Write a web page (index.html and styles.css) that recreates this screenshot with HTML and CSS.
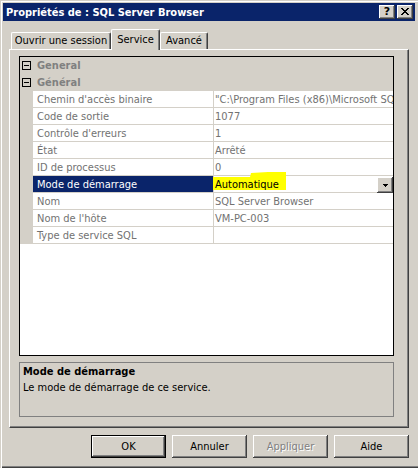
FILE: index.html
```html
<!DOCTYPE html>
<html lang="fr">
<head>
<meta charset="utf-8">
<title>Propriétés de : SQL Server Browser</title>
<link rel="stylesheet" href="styles.css">
</head>
<body>
<div class="window">
  <div class="titlebar">
    <span class="title">Propriétés de : SQL Server Browser</span>
    <div class="caption-buttons">
      <button class="caption-btn">?</button>
      <button class="caption-btn">
        <svg width="8" height="7" viewBox="0 0 8 7" shape-rendering="crispEdges">
          <rect x="0" y="0" width="2" height="1"/><rect x="6" y="0" width="2" height="1"/>
          <rect x="1" y="1" width="2" height="1"/><rect x="5" y="1" width="2" height="1"/>
          <rect x="2" y="2" width="4" height="1"/>
          <rect x="3" y="3" width="2" height="1"/>
          <rect x="2" y="4" width="4" height="1"/>
          <rect x="1" y="5" width="2" height="1"/><rect x="5" y="5" width="2" height="1"/>
          <rect x="0" y="6" width="2" height="1"/><rect x="6" y="6" width="2" height="1"/>
        </svg>
      </button>
    </div>
  </div>

  <div class="client">
    <div class="tabs">
      <div class="tab tab-logon">Ouvrir une session</div>
      <div class="tab tab-service tab-active">Service</div>
      <div class="tab tab-advanced">Avancé</div>
    </div>

    <div class="panel">
      <div class="propgrid">
        <div class="row category">
          <span class="gutter"><span class="toggle"></span></span>
          <span class="cat-label">General</span>
        </div>
        <div class="row category">
          <span class="gutter"><span class="toggle"></span></span>
          <span class="cat-label">Général</span>
        </div>
        <div class="row">
          <span class="gutter"></span>
          <span class="name">Chemin d'accès binaire</span>
          <span class="value">"C:\Program Files (x86)\Microsoft SQL Server\90\Shared\sqlbrowser.exe"</span>
        </div>
        <div class="row">
          <span class="gutter"></span>
          <span class="name">Code de sortie</span>
          <span class="value">1077</span>
        </div>
        <div class="row">
          <span class="gutter"></span>
          <span class="name">Contrôle d'erreurs</span>
          <span class="value">1</span>
        </div>
        <div class="row">
          <span class="gutter"></span>
          <span class="name">État</span>
          <span class="value">Arrêté</span>
        </div>
        <div class="row">
          <span class="gutter"></span>
          <span class="name">ID de processus</span>
          <span class="value">0</span>
        </div>
        <div class="row selected">
          <span class="gutter"></span>
          <span class="name">Mode de démarrage</span>
          <span class="value editable">
            <span class="marker"></span>
            <span class="value-text">Automatique</span>
            <span class="dropdown">
              <svg width="5" height="3" viewBox="0 0 5 3" shape-rendering="crispEdges">
                <rect x="0" y="0" width="5" height="1"/>
                <rect x="1" y="1" width="3" height="1"/>
                <rect x="2" y="2" width="1" height="1"/>
              </svg>
            </span>
          </span>
        </div>
        <div class="row">
          <span class="gutter"></span>
          <span class="name">Nom</span>
          <span class="value">SQL Server Browser</span>
        </div>
        <div class="row">
          <span class="gutter"></span>
          <span class="name">Nom de l'hôte</span>
          <span class="value">VM-PC-003</span>
        </div>
        <div class="row">
          <span class="gutter"></span>
          <span class="name">Type de service SQL</span>
          <span class="value"></span>
        </div>
      </div>

      <div class="description">
        <div class="desc-title">Mode de démarrage</div>
        <div class="desc-text">Le mode de démarrage de ce service.</div>
      </div>
    </div>

    <div class="actions">
      <button class="btn btn-default">OK</button>
      <button class="btn">Annuler</button>
      <button class="btn btn-disabled">Appliquer</button>
      <button class="btn">Aide</button>
    </div>
  </div>
</div>
</body>
</html>
```

FILE: styles.css
```css
html, body {
  margin: 0;
  padding: 0;
}

body {
  width: 418px;
  height: 468px;
  overflow: hidden;
  background: #d4d0c8;
  font-family: "DejaVu Sans Condensed", "DejaVu Sans", sans-serif;
  font-stretch: condensed;
  font-size: 11px;
  color: #000;
}

/* dialog frame: light edge top/left, shadow at the bottom */
.window {
  width: 418px;
  height: 468px;
  box-sizing: border-box;
  padding: 3px 3px 2px 3px;
  display: flex;
  flex-direction: column;
  background: #d4d0c8;
  box-shadow: inset 1px 1px 0 #d4d0c8, inset 2px 2px 0 #fff,
              inset 0 -1px 0 #404040, inset 0 -2px 0 #808080;
}

.titlebar {
  height: 18px;
  flex: none;
  display: flex;
  align-items: center;
  justify-content: space-between;
  padding: 0 2px 0 3px;
  background: #0a246a;
  color: #fff;
  font-weight: bold;
}

.title {
  white-space: nowrap;
}

.caption-buttons {
  display: flex;
  gap: 2px;
}

.caption-btn,
.btn,
.dropdown {
  background: #d4d0c8;
  box-shadow: inset -1px -1px 0 #404040, inset 1px 1px 0 #fff,
              inset -2px -2px 0 #808080;
}

.caption-btn {
  width: 16px;
  height: 14px;
  padding: 0;
  border: 0;
  display: flex;
  align-items: center;
  justify-content: center;
  font: bold 11px "DejaVu Sans", sans-serif;
  color: #000;
  line-height: 14px;
}

.caption-btn svg {
  fill: #000;
  margin-top: -1px;
}

.client {
  flex: 1;
  display: flex;
  flex-direction: column;
  padding: 8px 6px 0 6px;
}

/* tab strip */
.tabs {
  position: relative;
  z-index: 1;
  height: 21px;
  margin-bottom: -1px;
  padding-left: 2px;
  display: flex;
  align-items: flex-start;
}

.tab {
  box-sizing: border-box;
  height: 17px;
  margin-top: 3px;
  border-top: 1px solid #fff;
  border-left: 1px solid #fff;
  border-right: 1px solid #404040;
  border-top-left-radius: 2px;
  border-top-right-radius: 2px;
  box-shadow: inset -1px 0 0 #808080;
  background: #d4d0c8;
  text-align: center;
  line-height: 15px;
  white-space: nowrap;
}

.tab-logon { width: 100px; }
.tab-service { width: 49px; }
.tab-advanced { width: 48px; }

.tab-active {
  height: 21px;
  margin-top: 0;
  padding-top: 2px;
}

.panel {
  box-sizing: border-box;
  height: 379px;
  flex: none;
  padding: 6px 14px 10px 9px;
  border-top: 1px solid #fff;
  border-left: 1px solid #fff;
  border-right: 1px solid #404040;
  border-bottom: 1px solid #404040;
  box-shadow: inset -1px -1px 0 #808080;
  display: flex;
  flex-direction: column;
  gap: 6px;
}

/* property grid */
.propgrid {
  box-sizing: border-box;
  height: 300px;
  border: 1px solid #000;
  background: #fff;
  overflow: hidden;
}

.row {
  display: flex;
  box-sizing: border-box;
  height: 17px;
  line-height: 18px;
  border-bottom: 1px solid #d4d0c8;
  color: #727272;
  white-space: nowrap;
}

.gutter {
  flex: none;
  width: 13px;
  background: #d4d0c8;
  display: flex;
  align-items: center;
}

.category {
  background: #d4d0c8;
}

.toggle {
  position: relative;
  box-sizing: border-box;
  width: 9px;
  height: 9px;
  margin-left: 2px;
  margin-top: 1px;
  border: 1px solid #000;
}

.toggle::after {
  content: "";
  position: absolute;
  left: 1px;
  top: 3px;
  width: 5px;
  height: 1px;
  background: #000;
}

.cat-label {
  padding-left: 4px;
  font-weight: bold;
  color: #808080;
}

.name {
  flex: none;
  box-sizing: border-box;
  width: 181px;
  padding-left: 4px;
  border-right: 1px solid #d4d0c8;
  overflow: hidden;
}

.value {
  flex: 1;
  min-width: 0;
  padding-left: 1px;
  overflow: hidden;
}

.selected .name {
  background: #0a246a;
  color: #fff;
}

.value.editable {
  position: relative;
  overflow: visible;
  display: flex;
  color: #000;
}

.marker {
  position: absolute;
  left: -1px;
  top: -4px;
  width: 73px;
  height: 18px;
  background: #ffff00;
  clip-path: polygon(0 5px, 37px 5px, 38px 1px, 55px 0, 73px 0, 73px 18px, 0 18px);
}

.value-text {
  position: relative;
  flex: 1;
}

.dropdown {
  flex: none;
  align-self: flex-end;
  width: 16px;
  height: 16px;
  margin-bottom: -1px;
  display: flex;
  align-items: center;
  justify-content: center;
}

.dropdown svg {
  fill: #000;
  margin-left: 1px;
}

/* help text under the grid */
.description {
  box-sizing: border-box;
  height: 55px;
  flex: none;
  padding: 1px 3px;
  border: 1px solid #808080;
  line-height: 16px;
}

.desc-title {
  font-weight: bold;
}

/* dialog buttons */
.actions {
  margin-top: 7px;
  display: flex;
  justify-content: flex-end;
  gap: 6px;
}

.btn {
  box-sizing: border-box;
  width: 75px;
  height: 23px;
  padding: 0;
  border: 0;
  font: inherit;
  color: #000;
}

.btn-default {
  border: 1px solid #000;
}

.btn-disabled {
  color: #808080;
  text-shadow: 1px 1px 0 #fff;
}
```
